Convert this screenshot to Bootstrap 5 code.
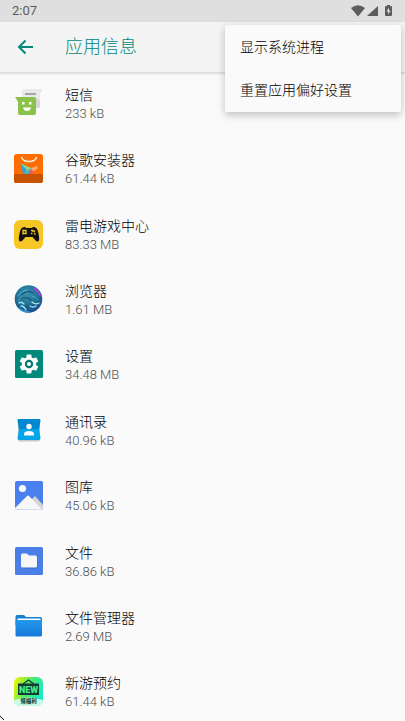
<!DOCTYPE html>
<html lang="zh-CN">
<head>
<meta charset="utf-8">
<meta name="viewport" content="width=device-width, initial-scale=1">
<title>应用信息</title>
<link href="https://cdn.jsdelivr.net/npm/bootstrap@5.3.0/dist/css/bootstrap.min.css" rel="stylesheet">
<style>
  body { font-family: Roboto, "Noto Sans CJK SC", sans-serif; background: #fafafa; color: #212121; }
  .screen { overflow: hidden; }
  .status-bar { height: 22px; background: #dfdfdf; color: #5c5c5c; font-size: 13px; line-height: 22px; padding: 0 12px; }
  .app-bar { height: 51px; background: #f4f4f4; border-bottom: 1px solid #dcdcdc; box-shadow: 0 1px 2px rgba(0,0,0,.12); padding: 0 14px; gap: 28px; z-index: 1; }
  .app-bar h1 { font-size: 18px; line-height: 24px; font-weight: 300; color: #00897b; }
  .back-btn { width: 23px; height: 24px; line-height: 0; }
  .app-scroll { overflow-y: auto; scrollbar-width: none; min-height: 0; }
  .app-scroll::-webkit-scrollbar { display: none; }
  .app-list { min-height: 654px; }
  .app-row { padding: 0 14px 4px; gap: 21px; color: #212121; background: transparent; }
  .app-row svg { width: 30px; height: 30px; flex: none; margin-bottom: 2px; }
  .app-name { font-size: 14px; line-height: 20px; font-weight: 300; color: #000; }
  .app-size { font-size: 13px; line-height: 18px; font-weight: 300; color: #505050; }
  .overflow-menu { top: 25px; right: 4px; width: 176px; padding: 1px 0 0; background: #fafafa; border-radius: 2px; box-shadow: 0 3px 9px rgba(0,0,0,.24); }
  .overflow-menu .dropdown-item { font-size: 14px; line-height: 43px; padding: 0 15px; font-weight: 300; color: #000; }
  .corner-mark { left: 0; bottom: 0; }
</style>
<script src="https://cdn.jsdelivr.net/npm/bootstrap@5.3.0/dist/js/bootstrap.bundle.min.js"></script>
</head>
<body>
<div class="screen vh-100 d-flex flex-column position-relative">
  <div class="status-bar d-flex align-items-center justify-content-between flex-shrink-0">
    <span>2:07</span>
    <svg width="42" height="14" viewBox="0 0 42 14" fill="#5c5c5c" aria-hidden="true">
      <path d="M0 4Q7-1.400 14 4L7 12.500z"/>
      <path d="M27 2v10H16z"/>
      <path fill-rule="evenodd" d="M35 2h1V1h3v1h1q1 0 1 1v8q0 1-1 1h-5q-1 0-1-1V3q0-1 1-1zm3 1.500L35.500 7.500h1.700v3L39.700 6.500H38z"/>
    </svg>
  </div>

  <header class="app-bar d-flex align-items-center flex-shrink-0 position-relative">
    <button type="button" class="back-btn btn p-0 border-0" aria-label="返回">
      <svg width="23" height="24" viewBox="0 0 23 24" fill="none" stroke="#00897b" stroke-width="2"><path d="M19 12H5.500M11.500 5.500L5 12l6.500 6.500"/></svg>
    </button>
    <h1 class="m-0">应用信息</h1>
  </header>

  <main class="app-scroll flex-fill">
    <div class="app-list list-group list-group-flush d-flex flex-column">
      <a href="#" class="app-row list-group-item-action text-decoration-none d-flex align-items-center flex-fill">
        <svg viewBox="0 0 30 30" aria-hidden="true"><path fill="#e9e9e9" d="M8 1h20.500l-2.500 5v12q0 2-2 2H10q-2 0-2-2z"/><path fill="#a5a5a5" d="M11 5h11v2H11z"/><path fill="#d6d6d6" d="M22 9l4 4v5q0 2-2 2h-2z"/><path fill="#8bc34a" d="M1 9h19q2 0 2 2v14q0 2-2 2H6q-2 0-2-2V14z"/><path fill="#fff" d="M8 14h2.500v2.500H8zm7 0h2.500v2.500H15zM9 19.500h8q-1 3.500-4 3.500t-4-3.500z"/></svg>
        <span class="d-flex flex-column"><span class="app-name">短信</span><span class="app-size">233 kB</span></span>
      </a>
      <a href="#" class="app-row list-group-item-action text-decoration-none d-flex align-items-center flex-fill">
        <svg viewBox="0 0 30 30" aria-hidden="true"><rect width="29" height="29" y="1" rx="2.500" fill="#ff6d00"/><path fill="#c75300" d="M0 21h29v6.500q0 2.500-2.500 2.500h-24Q0 30 0 27.500z"/><path d="M7.500 4q1 4.500 7.500 4.500T22.500 4" fill="none" stroke="#fff3e6" stroke-width="1.400"/><path fill="#45b9b5" d="M6.500 10.500L17 15.500 15 21H9.500z"/><path fill="#3a9fc4" d="M6.500 10.500L12 16l-2 5H9z"/><path fill="#8fd09a" d="M6.500 10.500L17 15l-3 3z"/><path fill="#e65a72" d="M15.500 17l5 0-3 4h-3z"/><path fill="#ffa86b" d="M16.500 15.500l6-2.500 1.500 2-4 3.500z"/></svg>
        <span class="d-flex flex-column"><span class="app-name">谷歌安装器</span><span class="app-size">61.44 kB</span></span>
      </a>
      <a href="#" class="app-row list-group-item-action text-decoration-none d-flex align-items-center flex-fill">
        <svg viewBox="0 0 30 30" aria-hidden="true"><rect width="29" height="29" y="1" rx="6" fill="#f6c624"/><path fill="#111" d="M8.500 8.500q2-1.300 4 .5h5q2-1.800 4-.5 2 1 3 6t.5 7q-1 1.500-3 .5l-3.500-4h-7L8 22q-2 1-3-.5-.500-2 .5-7t3-6z"/><path fill="none" stroke="#f6c624" stroke-width="1.300" d="M9 15.500v-4h3v3H9M17 11.500h2v1.500M20.500 11.500v2M17 14.500h1.500M20 15h1.500"/></svg>
        <span class="d-flex flex-column"><span class="app-name">雷电游戏中心</span><span class="app-size">83.33 MB</span></span>
      </a>
      <a href="#" class="app-row list-group-item-action text-decoration-none d-flex align-items-center flex-fill">
        <svg viewBox="0 0 30 30" aria-hidden="true"><defs><radialGradient id="globe" cx=".45" cy=".3" r=".75"><stop offset="0" stop-color="#3a94b0"/><stop offset=".65" stop-color="#1a6890"/><stop offset="1" stop-color="#1c4390"/></radialGradient></defs><circle cx="14.500" cy="15" r="13.800" fill="url(#globe)"/><g fill="none" stroke-linecap="round"><path stroke="#1a5674" stroke-width="1.200" d="M8 10q6-4 11-1M5 15q8-3 12 1M12 22q4 1 8-1"/><path stroke="#66b9ce" stroke-width=".8" d="M4 12q3-5 9-6M4 17q1-3 4-4M18 12q4 1 6 4"/><path stroke="#a5e1e8" stroke-width="1.300" d="M5 19q2-2 5 1M7 22q3 0 5 4M18 18q3 3 7 1M16 22q3 2 6 0"/><path stroke="#a743dd" stroke-width="1.900" d="M20.500 4.500q4 2.500 5.500 7"/><path stroke="#2b9bd8" stroke-width="1.500" d="M5 24q4 4 10 4"/></g></svg>
        <span class="d-flex flex-column"><span class="app-name">浏览器</span><span class="app-size">1.61 MB</span></span>
      </a>
      <a href="#" class="app-row list-group-item-action text-decoration-none d-flex align-items-center flex-fill">
        <svg viewBox="0 0 30 30" aria-hidden="true"><rect x="1" y="1" width="28" height="28" rx="1.500" fill="#00897b"/><g transform="translate(3.600 3.600) scale(.95)"><path fill="#fafafa" d="M19.430 12.980c.04-.32.07-.64.07-.98s-.03-.66-.07-.98l2.110-1.650c.19-.15.24-.42.12-.64l-2-3.460c-.12-.22-.39-.3-.61-.22l-2.490 1c-.52-.4-1.080-.73-1.690-.98l-.38-2.650C14.460 2.180 14.250 2 14 2h-4c-.25 0-.46.18-.49.42l-.38 2.650c-.61.25-1.170.59-1.690.98l-2.490-1c-.23-.09-.49 0-.61.22l-2 3.460c-.13.22-.07.49.12.64l2.110 1.650c-.04.32-.07.65-.07.98s.03.66.07.98l-2.110 1.650c-.19.15-.24.42-.12.64l2 3.460c.12.22.39.3.61.22l2.490-1c.52.4 1.080.73 1.690.98l.38 2.650c.03.24.24.42.49.42h4c.25 0 .46-.18.49-.42l.38-2.650c.61-.25 1.170-.59 1.690-.98l2.490 1c.23.09.49 0 .61-.22l2-3.460c.12-.22.07-.49-.12-.64z"/><circle cx="12" cy="12" r="3.300" fill="none" stroke="#00796d" stroke-width="2.200"/></g></svg>
        <span class="d-flex flex-column"><span class="app-name">设置</span><span class="app-size">34.48 MB</span></span>
      </a>
      <a href="#" class="app-row list-group-item-action text-decoration-none d-flex align-items-center flex-fill">
        <svg viewBox="0 0 30 30" aria-hidden="true"><rect x="4" y="5" width="22" height="21.500" rx="2" fill="#c9c9c9"/><path fill="#0288d1" d="M4 4h22l.5 1.500L25 15H5L3.500 5.500z"/><path fill="#03a4e8" d="M5 14h20l1.500 9q0 2-1.500 2H5q-1.500 0-1.500-2z"/><circle cx="15" cy="11.500" r="2.700" fill="#fafafa"/><path fill="#fafafa" d="M10 20.500v-1.500q0-3 5-3t5 3v1.500z"/></svg>
        <span class="d-flex flex-column"><span class="app-name">通讯录</span><span class="app-size">40.96 kB</span></span>
      </a>
      <a href="#" class="app-row list-group-item-action text-decoration-none d-flex align-items-center flex-fill">
        <svg viewBox="0 0 30 30" aria-hidden="true"><rect x="1" y="1" width="28" height="28.500" rx="1.500" fill="#4a80ee"/><circle cx="8.500" cy="8.500" r="3.600" fill="#fafafa"/><path fill="#d5d5d5" d="M15 22l6-6 8 9v3q0 1.500-1.500 1.500H15z"/><path fill="#f7f7f7" d="M1 28l12-12q1-1 2 0l13 13.500H2.500Q1 29.500 1 28z"/></svg>
        <span class="d-flex flex-column"><span class="app-name">图库</span><span class="app-size">45.06 kB</span></span>
      </a>
      <a href="#" class="app-row list-group-item-action text-decoration-none d-flex align-items-center flex-fill">
        <svg viewBox="0 0 30 30" aria-hidden="true"><rect x="1" y="1" width="28" height="28" rx="1.500" fill="#4a7fe8"/><path fill="#3b6acb" d="M8 22l14.500-12 1 1v10q0 1.500-1.500 1.500H9z"/><path fill="#f7f7f7" d="M8.500 7.500h4.500l2 2h6.500q1.500 0 1.500 1.500v9q0 1.500-1.500 1.500h-13Q7 21.500 7 20V9q0-1.500 1.500-1.500z"/></svg>
        <span class="d-flex flex-column"><span class="app-name">文件</span><span class="app-size">36.86 kB</span></span>
      </a>
      <a href="#" class="app-row list-group-item-action text-decoration-none d-flex align-items-center flex-fill">
        <svg viewBox="0 0 30 30" aria-hidden="true"><defs><linearGradient id="folder" x1="0" y1="0" x2="0" y2="1"><stop offset="0" stop-color="#2398ea"/><stop offset="1" stop-color="#1878dc"/></linearGradient></defs><path fill="#1780cf" d="M3 4h7l2 2h14.500Q28 6 28 7.500V14H1.500V5.500Q1.500 4 3 4z"/><path fill="#fff" d="M3.500 7.500h23V12h-23z"/><path fill="url(#folder)" d="M1.500 9h26.500v15q0 1.500-1.500 1.500H3q-1.500 0-1.500-1.500z"/></svg>
        <span class="d-flex flex-column"><span class="app-name">文件管理器</span><span class="app-size">2.69 MB</span></span>
      </a>
      <a href="#" class="app-row list-group-item-action text-decoration-none d-flex align-items-center flex-fill">
        <svg viewBox="0 0 30 30" aria-hidden="true"><defs><linearGradient id="fresh" x1="0" y1=".2" x2="1" y2=".6"><stop offset="0" stop-color="#e9f500"/><stop offset=".5" stop-color="#4bea70"/><stop offset="1" stop-color="#12ecca"/></linearGradient><clipPath id="tile"><rect y="1" width="29" height="29" rx="6"/></clipPath></defs><g clip-path="url(#tile)"><path fill="url(#fresh)" d="M0 1h29v29H0z"/><path fill="#c9fbe8" d="M0 24q14.500-5 29 0v6H0z"/></g><path fill="none" stroke="#143d35" stroke-width="1.300" d="M9 8l5.500-4L20 8"/><rect x="4" y="7.500" width="21" height="11.500" fill="#133c37"/><text x="14.500" y="16.500" text-anchor="middle" font-family="Roboto, sans-serif" font-weight="900" font-size="9" fill="#42f084">NEW</text><text x="14.500" y="27" text-anchor="middle" font-family="Noto Sans CJK SC, sans-serif" font-weight="900" font-size="5.500" fill="#154b3c">领福利</text></svg>
        <span class="d-flex flex-column"><span class="app-name">新游预约</span><span class="app-size">61.44 kB</span></span>
      </a>
    </div>
  </main>

  <div class="overflow-menu dropdown-menu show position-absolute border-0" role="menu">
    <button type="button" class="dropdown-item" role="menuitem">显示系统进程</button>
    <button type="button" class="dropdown-item" role="menuitem">重置应用偏好设置</button>
  </div>
  <svg class="corner-mark position-absolute" width="5" height="5" viewBox="0 0 5 5" aria-hidden="true"><path fill="#111" d="M0 0h1v1H0zM1 1h1v1H1zM2 2h1v1H2zM3 3h1v1H3z"/></svg>
</div>
</body>
</html>
